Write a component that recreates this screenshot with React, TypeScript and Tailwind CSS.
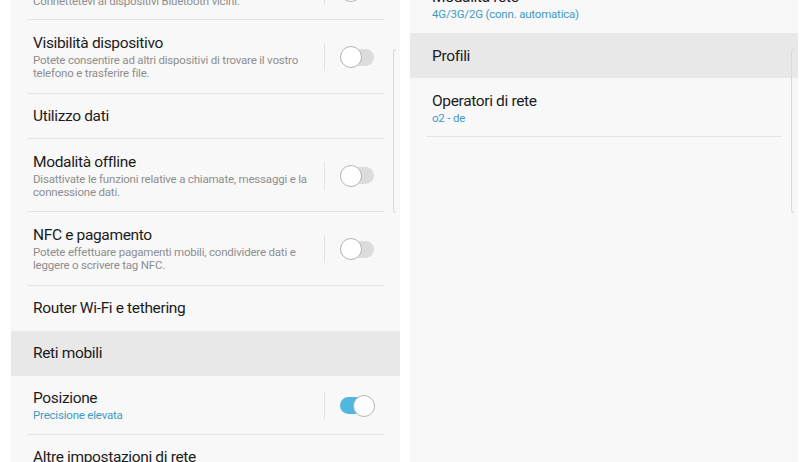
import React from "react";

type Row = {
  title: string;
  sub?: string[];
  accent?: boolean;
  toggle?: "on" | "off";
  active?: boolean;
  divider?: boolean;
};

const leftRows: Row[] = [
  { title: "Bluetooth", sub: ["Connettetevi ai dispositivi Bluetooth vicini."], toggle: "off", divider: true },
  {
    title: "Visibilità dispositivo",
    sub: ["Potete consentire ad altri dispositivi di trovare il vostro", "telefono e trasferire file."],
    toggle: "off",
    divider: true,
  },
  { title: "Utilizzo dati", divider: true },
  {
    title: "Modalità offline",
    sub: ["Disattivate le funzioni relative a chiamate, messaggi e la", "connessione dati."],
    toggle: "off",
    divider: true,
  },
  {
    title: "NFC e pagamento",
    sub: ["Potete effettuare pagamenti mobili, condividere dati e", "leggere o scrivere tag NFC."],
    toggle: "off",
    divider: true,
  },
  { title: "Router Wi-Fi e tethering" },
  { title: "Reti mobili", active: true },
  { title: "Posizione", sub: ["Precisione elevata"], accent: true, toggle: "on", divider: true },
  { title: "Altre impostazioni di rete", divider: true },
];

const rightRows: Row[] = [
  { title: "Modalità rete", sub: ["4G/3G/2G (conn. automatica)"], accent: true },
  { title: "Profili", active: true },
  { title: "Operatori di rete", sub: ["o2 - de"], accent: true, divider: true },
];

function Toggle({ on }: { on: boolean }) {
  return (
    <div className="flex items-center h-full">
      <div className="w-px h-[28px] bg-[#e3e3e3]" />
      <div className="relative w-[36px] h-[22px] ml-[15px] flex items-center">
        <div className={`w-[34px] h-[17px] rounded-full ${on ? "bg-[#52b6df]" : "bg-[#dcdcdc]"}`} />
        <div
          className={`absolute top-0 w-[22px] h-[22px] rounded-full bg-white border border-[#b5b5b5] ${
            on ? "left-[13px]" : "left-0"
          }`}
        />
      </div>
    </div>
  );
}

function SettingRow({ row }: { row: Row }) {
  const h = !row.sub ? "h-[45px]" : row.sub.length === 1 ? "h-[59px] pt-[2px]" : "h-[73.5px] pt-[2px]";
  return (
    <div className={row.active ? "bg-[#e8e8e8]" : ""}>
      <div className={`${h} mx-[16px] flex items-center pl-[6px] pr-[8px] ${row.divider ? "border-b border-[#e6e6e6]" : ""}`}>
        <div className="flex-1 flex flex-col justify-center">
          <div className="text-[15.5px] leading-[18px] tracking-[-0.35px] text-[#1c1c1c]">{row.title}</div>
          {row.sub &&
            row.sub.map((s, i) => (
              <div
                key={s}
                className={`text-[11.5px] leading-[13px] tracking-[-0.2px] ${i === 0 ? "mt-[2px]" : ""} ${
                  row.accent ? "text-[#3f9bc2]" : "text-[#8e8e8e]"
                }`}
              >
                {s}
              </div>
            ))}
        </div>
        {row.toggle && <Toggle on={row.toggle === "on"} />}
      </div>
    </div>
  );
}

function EdgeLine() {
  return (
    <div className="absolute right-[4px] top-[49px] h-[164px] w-[3px] rounded-l-[3px] border-l border-t border-b border-[#d9d9d9]" />
  );
}

export default function App() {
  return (
    <div
      className="w-[810px] h-[462px] bg-white flex gap-[10px] pl-[11px] overflow-hidden"
      style={{ fontFamily: "Roboto, 'Noto Sans', sans-serif" }}
    >
      <div className="relative w-[389px] h-full bg-[#f8f8f8] overflow-hidden">
        <div className="mt-[-39px]">
          {leftRows.map((r) => (
            <SettingRow key={r.title} row={r} />
          ))}
        </div>
        <EdgeLine />
      </div>
      <div className="relative w-[388px] h-full bg-[#f8f8f8] overflow-hidden">
        <div className="mt-[-26px]">
          {rightRows.map((r) => (
            <SettingRow key={r.title} row={r} />
          ))}
        </div>
        <EdgeLine />
      </div>
    </div>
  );
}
